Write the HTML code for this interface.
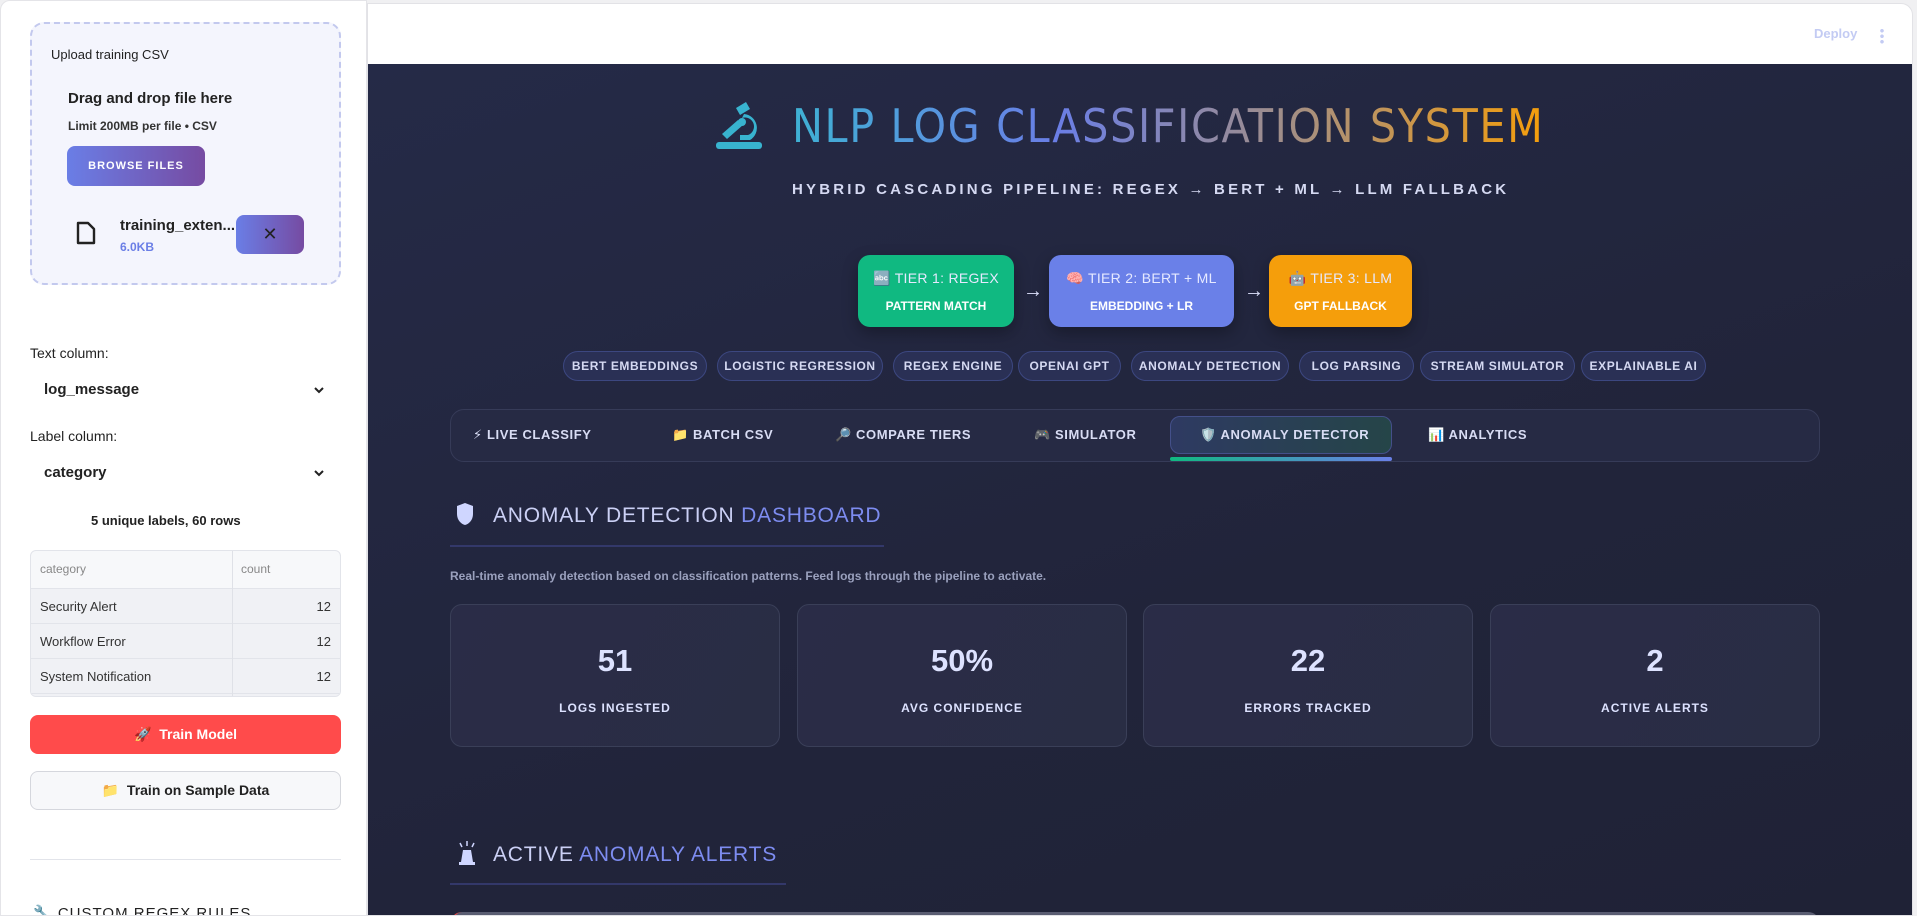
<!DOCTYPE html>
<html><head><meta charset="utf-8"><style>
*{box-sizing:border-box;margin:0;padding:0}
body{width:1917px;height:916px;overflow:hidden;background:#f0f0f2;font-family:"Liberation Sans","DejaVu Sans",sans-serif;position:relative}
.abs{position:absolute}
#side{left:0;top:0;width:367px;height:916px;background:#fff;border-radius:10px 0 0 0;border:1px solid #e4e4e8;overflow:hidden}
#main{left:367px;top:3px;width:1546px;height:913px;background:#fff;border-radius:0 12px 0 0;border:1px solid #e2e2e6;overflow:hidden}
#dark{left:0;top:60px;width:1546px;height:860px;background:linear-gradient(160deg,#252a47 0%,#21243a 60%,#1f2236 100%)}
.t{white-space:nowrap}
.chip{position:absolute;height:30px;border:1px solid #3c4780;background:#2a3055;border-radius:15px;color:#d5d9f2;font-size:12px;font-weight:bold;letter-spacing:.6px;display:flex;align-items:center;justify-content:center;white-space:nowrap}
.tier{position:absolute;height:72px;border-radius:12px;color:#fff;text-align:center;box-shadow:0 6px 16px rgba(0,0,0,.3);white-space:nowrap}
.tier .a{font-size:14px;margin-top:15px;color:#e6e9ff;letter-spacing:.3px}
.tier .b{font-size:12px;font-weight:bold;margin-top:12px}
.tab{position:absolute;font-size:13px;font-weight:bold;color:#d8dcf4;letter-spacing:.6px}
.card{position:absolute;width:330px;height:143px;border:1px solid #3a3f58;border-radius:12px;background:linear-gradient(120deg,#2a2c47,#292d44);text-align:center;color:#dde2ff}
.card .n{font-size:31px;margin-top:38px;font-weight:bold}
.card .l{font-size:12px;font-weight:bold;letter-spacing:1px;margin-top:22px}
.row{position:absolute;left:0;width:310px;height:35px;border-top:1px solid #e2e4ea;background:#f0f1f5;font-size:13px;color:#333}
</style></head><body>
<div id="side" class="abs">
 <div class="abs" style="left:29px;top:21px;width:311px;height:263px;border:2px dashed #c3c9ee;border-radius:14px;background:#f4f5fd"></div>
 <div class="abs t" style="left:50px;top:46px;font-size:13px;color:#222">Upload training CSV</div>
 <div class="abs t" style="left:67px;top:89px;font-size:15px;font-weight:bold;color:#222">Drag and drop file here</div>
 <div class="abs t" style="left:67px;top:118px;font-size:12px;font-weight:bold;color:#333">Limit 200MB per file • CSV</div>
 <div class="abs" style="left:66px;top:145px;width:138px;height:40px;border-radius:8px;background:linear-gradient(90deg,#6a7ee6,#764ba2);color:#fff;font-size:11px;font-weight:bold;letter-spacing:1px;display:flex;align-items:center;justify-content:center">BROWSE FILES</div>
 <svg class="abs" style="left:74px;top:220px" width="22" height="24" viewBox="0 0 22 24"><path d="M3 2h10l6 6v14H3z" fill="none" stroke="#222" stroke-width="2.4" stroke-linejoin="round"/></svg>
 <div class="abs t" style="left:119px;top:216px;font-size:15px;font-weight:bold;color:#222">training_exten...</div>
 <div class="abs t" style="left:119px;top:239px;font-size:12px;font-weight:bold;color:#6a7ee6">6.0KB</div>
 <div class="abs" style="left:235px;top:214px;width:68px;height:39px;border-radius:8px;background:linear-gradient(90deg,#6a7ee6,#764ba2);color:#222;font-size:18px;display:flex;align-items:center;justify-content:center">✕</div>
 <div class="abs t" style="left:29px;top:344px;font-size:14px;color:#222">Text column:</div>
 <div class="abs t" style="left:43px;top:380px;font-size:15px;font-weight:bold;color:#222">log_message</div>
 <svg class="abs" style="left:312px;top:385px" width="12" height="8" viewBox="0 0 12 8"><path d="M2 2l4 4 4-4" fill="none" stroke="#222" stroke-width="2"/></svg>
 <div class="abs t" style="left:29px;top:427px;font-size:14px;color:#222">Label column:</div>
 <div class="abs t" style="left:43px;top:463px;font-size:15px;font-weight:bold;color:#222">category</div>
 <svg class="abs" style="left:312px;top:468px" width="12" height="8" viewBox="0 0 12 8"><path d="M2 2l4 4 4-4" fill="none" stroke="#222" stroke-width="2"/></svg>
 <div class="abs t" style="left:90px;top:512px;font-size:13px;font-weight:bold;color:#222">5 unique labels, 60 rows</div>
 <div class="abs" style="left:29px;top:549px;width:311px;height:147px;border:1px solid #e2e4ea;border-radius:6px;overflow:hidden;background:#f7f8fa">
  <div class="abs t" style="left:9px;top:11px;font-size:12px;color:#888">category</div>
  <div class="abs t" style="left:210px;top:11px;font-size:12px;color:#888">count</div>
  <div class="row" style="top:37px"><span class="abs" style="left:9px;top:10px">Security Alert</span><span class="abs" style="right:10px;top:10px">12</span></div>
  <div class="row" style="top:72px"><span class="abs" style="left:9px;top:10px">Workflow Error</span><span class="abs" style="right:10px;top:10px">12</span></div>
  <div class="row" style="top:107px"><span class="abs" style="left:9px;top:10px">System Notification</span><span class="abs" style="right:10px;top:10px">12</span></div>
  <div class="row" style="top:142px"></div>
  <div class="abs" style="left:201px;top:0;width:1px;height:147px;background:#dfe1e7"></div>
 </div>
 <div class="abs" style="left:29px;top:714px;width:311px;height:39px;border-radius:8px;background:#ff4b4b;color:#fff;font-size:14px;font-weight:bold;display:flex;align-items:center;justify-content:center">🚀&nbsp; Train Model</div>
 <div class="abs" style="left:29px;top:770px;width:311px;height:39px;border-radius:8px;background:#f7f8fa;border:1px solid #d5d7dd;color:#222;font-size:14px;font-weight:bold;display:flex;align-items:center;justify-content:center">📁&nbsp; Train on Sample Data</div>
 <div class="abs" style="left:29px;top:858px;width:311px;height:1px;background:#e2e4ea"></div>
 <div class="abs t" style="left:32px;top:903px;font-size:15px;color:#222;letter-spacing:1px">🔧 CUSTOM REGEX RULES</div>
</div>
<div id="main" class="abs">
 <div class="abs t" style="left:1446px;top:22px;font-size:13px;font-weight:bold;color:#c3cbf3">Deploy</div>
 <div class="abs" style="left:1512px;top:24px;width:4px;height:16px;background:radial-gradient(circle,#c3cbf3 1.6px,transparent 2px) 0 0/4px 5.5px"></div>
 <div id="dark" class="abs">
  <svg class="abs" style="left:346px;top:36px" width="52" height="50" viewBox="0 0 52 50"><g fill="#38b3cf"><rect x="2" y="42" width="46" height="7" rx="3"/><path d="M8 34l16-14 5 5-16 14z"/><path d="M22 8l10-6 4 7-10 6z"/><path d="M30 14a14 14 0 0 1 6 26h-10v-5h8a9 9 0 0 0-6-17z"/><circle cx="28" cy="22" r="4"/></g></svg>
  <div class="abs t" style="left:424px;top:35px;font-size:46px;letter-spacing:1.6px;font-family:'DejaVu Sans Condensed','Liberation Sans',sans-serif;background:linear-gradient(90deg,#3fb1d4 0%,#6a7ee6 35%,#a08e8a 65%,#f59e0b 100%);-webkit-background-clip:text;background-clip:text;color:transparent">NLP LOG CLASSIFICATION SYSTEM</div>
  <div class="abs t" style="left:424px;top:117px;font-size:15px;font-weight:bold;letter-spacing:3.2px;color:#d5d9f2">HYBRID CASCADING PIPELINE: REGEX → BERT + ML → LLM FALLBACK</div>
  <div class="tier" style="left:490px;top:191px;width:156px;background:#10b981"><div class="a">🔤 TIER 1: REGEX</div><div class="b">PATTERN MATCH</div></div>
  <div class="abs t" style="left:655px;top:216px;color:#e0e4ff;font-size:20px;font-weight:bold">→</div>
  <div class="tier" style="left:681px;top:191px;width:185px;background:#6a80e8"><div class="a">🧠 TIER 2: BERT + ML</div><div class="b">EMBEDDING + LR</div></div>
  <div class="abs t" style="left:876px;top:216px;color:#e0e4ff;font-size:20px;font-weight:bold">→</div>
  <div class="tier" style="left:901px;top:191px;width:143px;background:#f59e0b"><div class="a">🤖 TIER 3: LLM</div><div class="b">GPT FALLBACK</div></div>
  <div class="chip" style="left:195px;top:287px;width:144px">BERT EMBEDDINGS</div>
  <div class="chip" style="left:349px;top:287px;width:166px">LOGISTIC REGRESSION</div>
  <div class="chip" style="left:525px;top:287px;width:120px">REGEX ENGINE</div>
  <div class="chip" style="left:650px;top:287px;width:103px">OPENAI GPT</div>
  <div class="chip" style="left:763px;top:287px;width:158px">ANOMALY DETECTION</div>
  <div class="chip" style="left:931px;top:287px;width:115px">LOG PARSING</div>
  <div class="chip" style="left:1052px;top:287px;width:155px">STREAM SIMULATOR</div>
  <div class="chip" style="left:1213px;top:287px;width:125px">EXPLAINABLE AI</div>
  <div class="abs" style="left:82px;top:345px;width:1370px;height:53px;border:1px solid #363b58;border-radius:14px;background:#262a44"></div>
  <div class="abs" style="left:802px;top:352px;width:222px;height:38px;border:1px solid #44508a;border-radius:10px;background:linear-gradient(90deg,#2e3a62,#254548)"></div>
  <div class="abs" style="left:802px;top:393px;width:222px;height:4px;border-radius:2px;background:linear-gradient(90deg,#10b981,#6a80e8)"></div>
  <div class="tab t" style="left:105px;top:363px">⚡ LIVE CLASSIFY</div>
  <div class="tab t" style="left:304px;top:363px">📁 BATCH CSV</div>
  <div class="tab t" style="left:467px;top:363px">🔎 COMPARE TIERS</div>
  <div class="tab t" style="left:666px;top:363px">🎮 SIMULATOR</div>
  <div class="tab t" style="left:832px;top:363px">🛡️ ANOMALY DETECTOR</div>
  <div class="tab t" style="left:1060px;top:363px">📊 ANALYTICS</div>
  <svg class="abs" style="left:88px;top:438px" width="18" height="24" viewBox="0 0 18 24"><path d="M9 1l8 3v8c0 6-4 10-8 11C5 22 1 18 1 12V4z" fill="#cfd6ff"/></svg>
  <div class="abs t" style="left:125px;top:440px;font-size:21px;letter-spacing:.8px;color:#cbd0f5">ANOMALY DETECTION <span style="color:#7d8cf0">DASHBOARD</span></div>
  <div class="abs" style="left:82px;top:481px;width:434px;height:2px;background:#33386a"></div>
  <div class="abs t" style="left:82px;top:505px;font-size:12px;font-weight:bold;color:#9aa0bd">Real-time anomaly detection based on classification patterns. Feed logs through the pipeline to activate.</div>
  <div class="card" style="left:82px;top:540px"><div class="n">51</div><div class="l">LOGS INGESTED</div></div>
  <div class="card" style="left:429px;top:540px"><div class="n">50%</div><div class="l">AVG CONFIDENCE</div></div>
  <div class="card" style="left:775px;top:540px"><div class="n">22</div><div class="l">ERRORS TRACKED</div></div>
  <div class="card" style="left:1122px;top:540px"><div class="n">2</div><div class="l">ACTIVE ALERTS</div></div>
  <svg class="abs" style="left:88px;top:776px" width="22" height="26" viewBox="0 0 22 26"><path d="M7 10h8l2 12H5z" fill="#cfd6ff"/><rect x="3" y="22" width="16" height="3" fill="#cfd6ff"/><path d="M11 1v5M4 3l2 4M18 3l-2 4" stroke="#cfd6ff" stroke-width="1.5"/></svg>
  <div class="abs t" style="left:125px;top:779px;font-size:21px;letter-spacing:.8px;color:#cbd0f5">ACTIVE <span style="color:#7d8cf0">ANOMALY ALERTS</span></div>
  <div class="abs" style="left:82px;top:819px;width:336px;height:2px;background:#33386a"></div>
  <div class="abs" style="left:82px;top:848px;width:1370px;height:40px;border-radius:12px;background:#5a5d72;border-left:3px solid #e04848"></div>
 </div>
</div>
</body></html>
